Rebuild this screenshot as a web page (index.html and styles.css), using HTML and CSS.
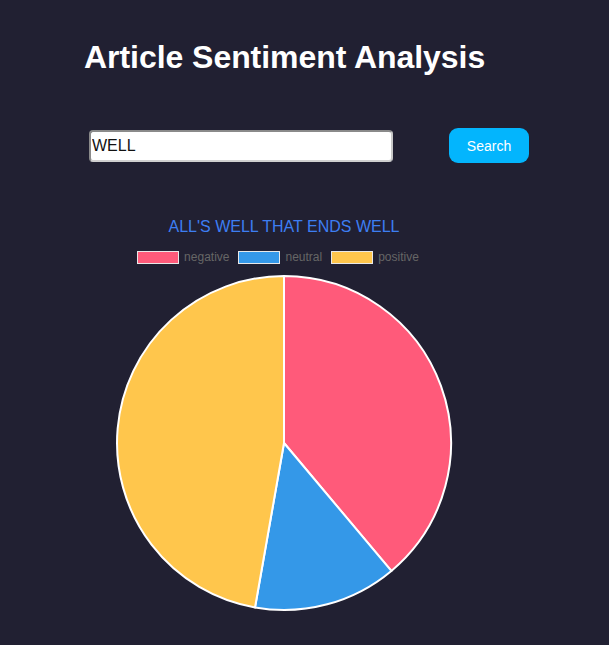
FILE: index.html
```
<!DOCTYPE html>
<html>
<head>
<meta charset="utf-8">
<link rel="stylesheet" href="styles.css">
</head>
<body>
<div class="page">
  <h1 class="title">Article Sentiment Analysis</h1>
  <div class="search-row">
    <input class="search-input" type="text" value="WELL">
    <button class="search-btn">Search</button>
  </div>
  <div class="chart">
    <div class="chart-title">ALL'S WELL THAT ENDS WELL</div>
    <div class="legend">
      <div class="legend-item"><span class="swatch neg"></span><span class="legend-label">negative</span></div>
      <div class="legend-item"><span class="swatch neu"></span><span class="legend-label">neutral</span></div>
      <div class="legend-item"><span class="swatch pos"></span><span class="legend-label">positive</span></div>
    </div>
    <svg class="pie" width="400" height="340" viewBox="0 0 400 340">
      <path d="M200,170 L200,3 A167,167 0 0 1 307.35,297.93 Z" fill="rgb(255,90,122)" stroke="#fff" stroke-width="2" stroke-linejoin="round"/>
      <path d="M200,170 L307.35,297.93 A167,167 0 0 1 171.01,334.46 Z" fill="rgb(52,152,232)" stroke="#fff" stroke-width="2" stroke-linejoin="round"/>
      <path d="M200,170 L171.01,334.46 A167,167 0 0 1 200,3 Z" fill="rgb(255,198,76)" stroke="#fff" stroke-width="2" stroke-linejoin="round"/>
    </svg>
  </div>
</div>
</body>
</html>
```
FILE: styles.css
```
html, body {
  margin: 0;
  padding: 0;
  background: #212032;
  height: 100%;
}
body {
  font-family: "Liberation Sans", Arial, sans-serif;
}
.page {
  padding-top: 39px;
  padding-left: 84px;
}
.title {
  margin: 0;
  font-size: 32px;
  line-height: 36px;
  font-weight: bold;
  color: #ffffff;
  letter-spacing: -0.05px;
}
.search-row {
  display: flex;
  align-items: center;
  margin-top: 53px;
  margin-left: 5px;
}
.search-input {
  box-sizing: border-box;
  width: 304px;
  height: 32px;
  margin: 0;
  padding: 0 0 0 1px;
  border: 2px solid #8a8a8a;
  border-bottom-color: #d0d0d0;
  border-right-color: #c8c8c8;
  border-radius: 4px;
  background: #fff;
  font-family: "Liberation Sans", Arial, sans-serif;
  font-size: 16px;
  color: #111;
  outline: none;
}
.search-btn {
  box-sizing: border-box;
  width: 80px;
  height: 35px;
  margin: 0 0 0 56px;
  padding: 0;
  border: none;
  border-radius: 9px;
  background: #03b5fd;
  color: #fff;
  font-family: "Liberation Sans", Arial, sans-serif;
  font-size: 14px;
}
.chart {
  width: 400px;
  margin-top: 54px;
  display: flex;
  flex-direction: column;
  align-items: center;
}
.chart-title {
  font-size: 16px;
  line-height: 20px;
  color: #3d7ef2;
}
.legend {
  display: flex;
  gap: 9px;
  margin-top: 14px;
  height: 13px;
  margin-left: -12px;
}
.legend-item {
  display: flex;
  align-items: center;
  gap: 5px;
}
.swatch {
  box-sizing: border-box;
  width: 42px;
  height: 13px;
  border: 1px solid #e8e8e8;
}
.swatch.neg { background: rgb(255,90,122); }
.swatch.neu { background: rgb(52,152,232); }
.swatch.pos { background: rgb(255,198,76); }
.legend-label {
  font-size: 12px;
  line-height: 13px;
  color: #666;
}
.pie {
  display: block;
  margin-top: 9px;
}
```
